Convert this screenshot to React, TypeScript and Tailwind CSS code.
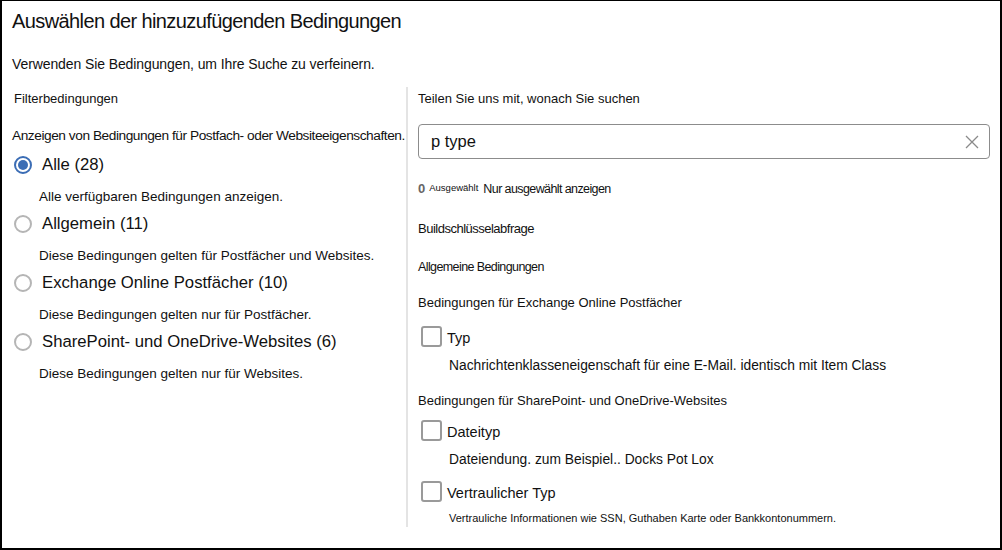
import React from "react";

const font = { fontFamily: '"Liberation Sans", Arial, sans-serif' };

function Radio({ checked, label, desc }: { checked?: boolean; label: string; desc: string }) {
  return (
    <div>
      <div className="flex items-center h-[22px]">
        <span
          className={
            "w-[18px] h-[18px] rounded-full border-2 flex items-center justify-center ml-[2px] " +
            (checked ? "border-[#3b6db5]" : "border-[#b5b5b5]")
          }
        >
          {checked && <span className="w-[10px] h-[10px] rounded-full bg-[#3b6db5]" />}
        </span>
        <span className="ml-[10px] text-[16.7px] text-[#111]">{label}</span>
      </div>
      <div className="ml-[27px] mt-[13px] text-[13.5px] text-[#111] h-[16px] leading-[16px]">{desc}</div>
    </div>
  );
}

function Check({ label, desc, small }: { label: string; desc: string; small?: boolean }) {
  return (
    <div>
      <div className="flex items-center">
        <span className="w-[21px] h-[21px] rounded-[3px] border-2 border-[#9a9a9a] ml-[3px]" />
        <span className="ml-[5px] mt-[5px] text-[14.5px] text-[#111]">{label}</span>
      </div>
      <div className={"ml-[31px] mt-[6px] text-[#111] " + (small ? "text-[11px]" : "text-[13.8px]")}>{desc}</div>
    </div>
  );
}

export default function App() {
  return (
    <div className="w-[1002px] h-[550px] bg-white border-black border-t border-l-2 border-r-2 border-b-2 overflow-hidden" style={font}>
      <div className="pl-[10px] pt-[6px]">
        <h1 className="text-[20px] leading-[28px] text-[#111] tracking-[-0.6px]">Auswählen der hinzuzufügenden Bedingungen</h1>
        <p className="mt-[20px] text-[14px] leading-[18px] text-[#111] tracking-[-0.1px]">Verwenden Sie Bedingungen, um Ihre Suche zu verfeinern.</p>
      </div>
      <div className="flex mt-[14px]">
        <div className="w-[404px] pl-[10px]">
          <div className="pt-[4px] pl-[2px] text-[13px] leading-[16px] text-[#111]">Filterbedingungen</div>
          <div className="mt-[20px] text-[13.7px] leading-[18px] text-[#111] whitespace-nowrap tracking-[-0.45px]">
            Anzeigen von Bedingungen für Postfach- oder Websiteeigenschaften.
          </div>
          <div className="mt-[9px] flex flex-col gap-[8px]">
            <Radio checked label="Alle (28)" desc="Alle verfügbaren Bedingungen anzeigen." />
            <Radio label="Allgemein (11)" desc="Diese Bedingungen gelten für Postfächer und Websites." />
            <Radio label="Exchange Online Postfächer (10)" desc="Diese Bedingungen gelten nur für Postfächer." />
            <Radio label="SharePoint- und OneDrive-Websites (6)" desc="Diese Bedingungen gelten nur für Websites." />
          </div>
        </div>
        <div className="w-[2px] h-[440px] bg-[#e4e4e4]" />
        <div className="flex-1 pl-[10px] pr-[10px]">
          <div className="pt-[4px] text-[13px] leading-[16px] text-[#111]">Teilen Sie uns mit, wonach Sie suchen</div>
          <div className="mt-[17px] h-[35px] border-[1.5px] border-[#8c8c8c] rounded-[4px] flex items-center justify-between pl-[12px] pr-[10px]">
            <span className="text-[16.5px] text-[#111]">p type</span>
            <svg width="14" height="14" viewBox="0 0 14 14">
              <path d="M1 1 L13 13 M13 1 L1 13" stroke="#8a8a8a" strokeWidth="1.3" />
            </svg>
          </div>
          <div className="mt-[20px] flex items-baseline text-[#111]">
            <span className="text-[13px] font-bold text-[#666]">0</span>
            <span className="ml-[4px] text-[9.5px] relative top-[-2px]">Ausgewählt</span>
            <span className="ml-[5px] text-[12.5px] tracking-[-0.6px]">Nur ausgewählt anzeigen</span>
          </div>
          <div className="mt-[22px] text-[13px] leading-[16px] text-[#111] tracking-[-0.5px]">Buildschlüsselabfrage</div>
          <div className="mt-[22px] text-[12.5px] leading-[16px] text-[#111] tracking-[-0.6px]">Allgemeine Bedingungen</div>
          <div className="mt-[20px] text-[13px] leading-[16px] text-[#111]">Bedingungen für Exchange Online Postfächer</div>
          <div className="mt-[12px]">
            <Check label="Typ" desc="Nachrichtenklasseneigenschaft für eine E-Mail. identisch mit Item Class" />
          </div>
          <div className="mt-[17px] text-[13px] leading-[16px] text-[#111]">Bedingungen für SharePoint- und OneDrive-Websites</div>
          <div className="mt-[8px]">
            <Check label="Dateityp" desc="Dateiendung. zum Beispiel.. Docks Pot Lox" />
          </div>
          <div className="mt-[7px]">
            <Check small label="Vertraulicher Typ" desc="Vertrauliche Informationen wie SSN, Guthaben Karte oder Bankkontonummern." />
          </div>
        </div>
      </div>
    </div>
  );
}
